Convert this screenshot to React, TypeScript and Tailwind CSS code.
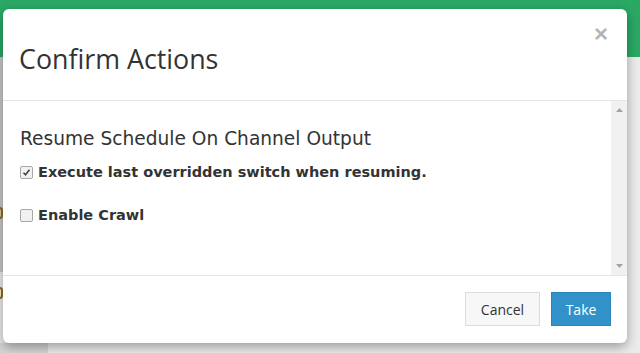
import React from "react";

export default function App() {
  return (
    <div className="relative w-[640px] h-[353px] overflow-hidden bg-[#ececec]" style={{ fontFamily: '"DejaVu Sans", Verdana, sans-serif' }}>
      {/* page behind */}
      <div className="h-[57px] bg-[#2aa965]" />
      <div className="absolute left-0 top-[57px] w-[3px] h-[215px] bg-[#c8c8c8]" />
      <div className="absolute left-0 top-[343px] w-[48px] h-[10px] bg-[#d6d6d6]" />
      <div className="absolute -left-[4px] top-[207px] w-[7px] h-[12px] rounded-full border-2 border-[#9a6a14]" />
      <div className="absolute -left-[4px] top-[287px] w-[7px] h-[12px] rounded-full border-2 border-[#9a6a14]" />

      {/* modal */}
      <div className="absolute left-[3px] top-[9px] w-[624px] h-[334px] bg-white rounded-[6px] shadow-[0_4px_12px_rgba(0,0,0,0.35)] flex flex-col overflow-hidden">
        <div className="relative h-[92px] shrink-0 border-b border-[#e5e5e5] flex items-end pb-[27px] pl-[16px]">
          <h4 className="text-[26.8px] leading-none text-[#333]" style={{ fontFamily: '"Open Sans", "Noto Sans", sans-serif', fontWeight: 400 }}>Confirm Actions</h4>
          <span className="absolute right-[19px] top-[13px] text-[#b5b5b5] text-[24px] leading-none font-bold" style={{ fontFamily: '"Liberation Sans", Arial, sans-serif' }}>×</span>
        </div>
        <div className="flex h-[175px] shrink-0 border-b border-[#e5e5e5]">
          <div className="flex-1 pl-[17px] pt-[27px]">
            <div className="text-[18.6px] leading-[22px] text-[#333]">Resume Schedule On Channel Output</div>
            <label className="mt-[12px] flex items-center gap-[5px] text-[14.5px] font-bold text-[#333]">
              <span className="w-[13px] h-[13px] rounded-[2px] border border-[#a8a8a8] bg-[#f1f1f1] flex items-center justify-center">
                <svg width="9" height="9" viewBox="0 0 9 9"><path d="M1.5 4.8 L3.5 6.8 L7.5 1.8" stroke="#444" strokeWidth="1.6" fill="none" /></svg>
              </span>
              Execute last overridden switch when resuming.
            </label>
            <label className="mt-[21px] flex items-center gap-[5px] text-[14.5px] font-bold text-[#333]">
              <span className="w-[13px] h-[13px] rounded-[2px] border border-[#a8a8a8] bg-[#f1f1f1]" />
              Enable Crawl
            </label>
          </div>
          <div className="w-[16px] bg-[#f1f1f1] flex flex-col items-center justify-between py-[7px]">
            <svg width="7" height="4" viewBox="0 0 7 4"><path d="M0 4 L3.5 0 L7 4Z" fill="#a3a3a3" /></svg>
            <svg width="7" height="4" viewBox="0 0 7 4"><path d="M0 0 L3.5 4 L7 0Z" fill="#a3a3a3" /></svg>
          </div>
        </div>
        <div className="flex-1 flex items-start justify-end gap-[11px] pt-[16px] pr-[16px]">
          <button className="h-[34px] w-[75px] border border-[#dcdcdc] bg-[#f7f7f7] text-[14px] text-[#333]" style={{ fontFamily: '"Open Sans", sans-serif' }}>Cancel</button>
          <button className="h-[34px] w-[60px] border border-[#2a84bb] bg-[#3092c9] text-[14px] text-white" style={{ fontFamily: '"Open Sans", sans-serif' }}>Take</button>
        </div>
      </div>
    </div>
  );
}
